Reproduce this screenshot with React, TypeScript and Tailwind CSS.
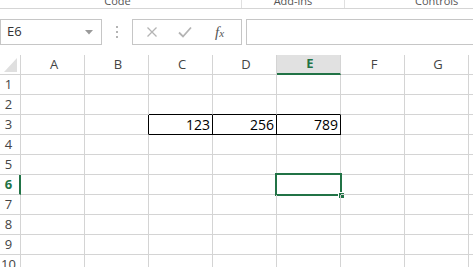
const cols = ['A', 'B', 'C', 'D', 'E', 'F', 'G', 'H'];
const rows = [1, 2, 3, 4, 5, 6, 7, 8, 9, 10];

const values: Record<string, string> = { C3: '123', D3: '256', E3: '789' };
const boxed = ['C3', 'D3', 'E3'];

function cellBorders(col: string, row: number) {
  const id = col + row;
  const below = col + (row + 1);
  const right = cols[cols.indexOf(col) + 1] + row;
  const r = boxed.includes(id) || boxed.includes(right) ? 'border-r-black' : 'border-r-[#d4d4d4]';
  const b = boxed.includes(id) || boxed.includes(below) ? 'border-b-black' : 'border-b-[#d4d4d4]';
  return `${r} ${b}`;
}

export default function App() {
  return (
    <div className="w-[473px] h-[267px] overflow-hidden bg-white font-['Open_Sans','Noto_Sans',sans-serif] text-[#444]">
      {/* ribbon group labels, clipped at the top */}
      <div className="flex h-[9px] overflow-hidden border-b border-[#d5d5d5] text-[11px] leading-[11px] text-[#555]">
        <div className="w-[242px] shrink-0 border-r border-[#e0e0e0] text-center -mt-[5px] pr-[6px]">Code</div>
        <div className="w-[103px] shrink-0 border-r border-[#e0e0e0] text-center -mt-[5px]">Add-ins</div>
        <div className="w-[180px] shrink-0 -mt-[5px] pl-[70px]">Controls</div>
      </div>

      {/* formula bar */}
      <div className="flex items-center h-[26px] mt-[10px]">
        <div className="flex items-center justify-between w-[102px] shrink-0 h-[26px] border border-[#c6c6c6] pl-[6px] pr-[8px] text-[13px] text-[#333]">
          <span>E6</span>
          <svg width="8" height="5" viewBox="0 0 8 5">
            <polygon points="0,0 8,0 4,4.5" fill="#9a9a9a" />
          </svg>
        </div>
        <div className="flex flex-col gap-[3px] ml-[14px] w-[16px] shrink-0">
          <span className="w-[2px] h-[2px] bg-[#b4b4b4]" />
          <span className="w-[2px] h-[2px] bg-[#b4b4b4]" />
          <span className="w-[2px] h-[2px] bg-[#b4b4b4]" />
        </div>
        <div className="flex items-center w-[110px] shrink-0 h-[26px] border border-[#c6c6c6]">
          <svg width="12" height="12" viewBox="0 0 12 12" className="ml-[13px]">
            <path d="M1.5 1.5 L10.5 10.5 M10.5 1.5 L1.5 10.5" stroke="#b4b4b4" strokeWidth="1.3" />
          </svg>
          <svg width="14" height="12" viewBox="0 0 14 12" className="ml-[20px]">
            <path d="M1 6.5 L5 10.5 L13 1.5" stroke="#b4b4b4" strokeWidth="1.8" fill="none" />
          </svg>
          <span className="ml-[23px] font-['Liberation_Serif',serif] italic text-[15px] text-[#555] leading-none">
            f<span className="text-[11px]">x</span>
          </span>
        </div>
        <div className="flex-1 h-[26px] ml-[4px] border border-[#c6c6c6] border-r-0" />
      </div>

      {/* grid */}
      <div className="mt-[10px] text-[13px]">
        <div className="flex h-[20px]">
          <div className="w-[21px] shrink-0 h-[20px] border-r border-b border-[#d4d4d4] flex items-end justify-end pr-[3px] pb-[2px]">
            <svg width="13" height="14" viewBox="0 0 13 14">
              <polygon points="13,0 13,14 0,14" fill="#dfdfdf" />
            </svg>
          </div>
          {cols.map((c) =>
            c === 'E' ? (
              <div
                key={c}
                className="w-[64px] shrink-0 h-[20px] bg-[#e1e1e1] border-r border-[#d4d4d4] border-b-2 border-b-[#217346] flex items-center justify-center pl-[3px] font-bold text-[#217346]"
              >
                {c}
              </div>
            ) : (
              <div
                key={c}
                className="w-[64px] shrink-0 h-[20px] border-r border-b border-[#d4d4d4] flex items-center justify-center pl-[3px]"
              >
                {c}
              </div>
            )
          )}
        </div>
        {rows.map((r) => (
          <div key={r} className="flex h-[20px]">
            {r === 6 ? (
              <div className="w-[21px] shrink-0 h-[20px] border-r-2 border-r-[#217346] border-b border-b-[#d4d4d4] flex items-center justify-center pr-[2px] font-bold text-[#217346]">
                {r}
              </div>
            ) : (
              <div className="w-[21px] shrink-0 h-[20px] border-r border-b border-[#d4d4d4] flex items-center justify-center pr-[3px]">
                {r}
              </div>
            )}
            {cols.map((c) => (
              <div
                key={c}
                className={`relative w-[64px] shrink-0 h-[20px] border-r border-b ${cellBorders(c, r)} flex items-center justify-end pr-[2px] text-[14px] text-black`}
              >
                {values[c + r]}
                {c === 'E' && r === 6 && (
                  <>
                    <div className="absolute -left-[2px] -top-[2px] w-[67px] h-[23px] border-2 border-[#217346]" />
                    <div className="absolute -right-[5px] -bottom-[5px] w-[7px] h-[7px] bg-[#217346] border border-white" />
                  </>
                )}
              </div>
            ))}
          </div>
        ))}
      </div>
    </div>
  );
}
